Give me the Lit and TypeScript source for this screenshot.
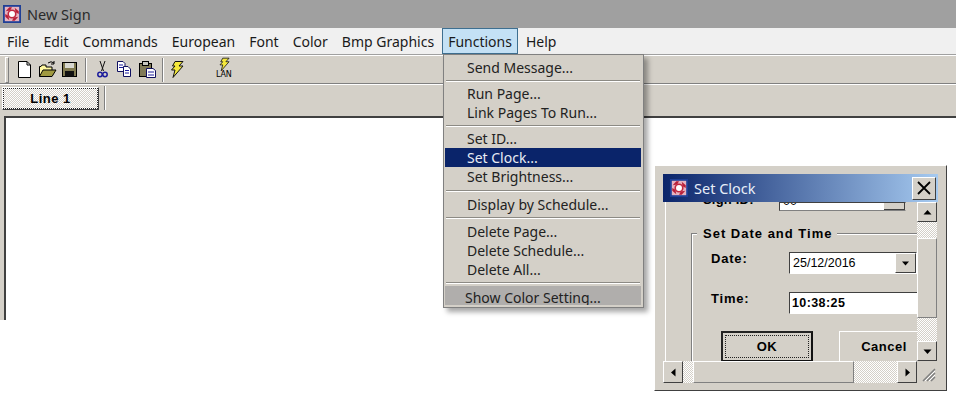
import { LitElement, html, css, svg } from "lit";
import { customElement } from "lit/decorators.js";

const sysIcon = (size: number) => html`<svg width=${size} height=${size} viewBox="0 0 20 20">
  <rect x="1" y="1" width="18" height="18" fill="#e6b4c0" stroke="#1f3f96" stroke-width="2"/>
  <path d="M3 7L7 2.5H10L8 6ZM13 3L17.5 7V10L14 8ZM17 13L13 17.5H10L12 14ZM7 17L2.5 13V10L6 12Z" fill="#b8203a"/>
  <circle cx="10" cy="10" r="4.2" fill="#fff" stroke="#c02840" stroke-width="1.8"/>
</svg>`;

const icons = {
  doc: svg`<path d="M3.5 1.5H12L15.5 5V17.5H3.5Z" fill="#fff" stroke="#000"/><path d="M12 1.5V5H15.5" fill="none" stroke="#000"/>`,
  open: svg`<path d="M1.5 16.5V6.5H3L4 5H8V7H14V10" fill="#fff8a0" stroke="#000"/><path d="M1.5 16.5L5 10H18L14 16.5Z" fill="#a09a40" stroke="#000"/><path d="M10 3Q13 0.5 16 3M16 1V4H13" fill="none" stroke="#000"/>`,
  save: svg`<rect x="1.5" y="2.5" width="14" height="14" fill="#807a50" stroke="#000"/><rect x="4" y="3" width="9" height="5" fill="#d8d8d0"/><rect x="4" y="11" width="9" height="5.5" fill="#111"/>`,
  cut: svg`<path d="M8 1L11.5 11M13 1L9.5 11" stroke="#111" fill="none"/><circle cx="8" cy="14.5" r="2.2" fill="none" stroke="#1c1c9c" stroke-width="1.5"/><circle cx="13" cy="14.5" r="2.2" fill="none" stroke="#1c1c9c" stroke-width="1.5"/>`,
  copy: svg`<path d="M2.5 1.5H8L10 3.5V11.5H2.5Z" fill="#fff" stroke="#101060"/><path d="M8.5 6.5H13L15.5 9V16.5H8.5Z" fill="#fff" stroke="#101060"/><path d="M4 5H8M4 7.5H8M10 10.5H14M10 13H14" stroke="#1c1c9c"/>`,
  paste: svg`<rect x="1.5" y="3.5" width="12" height="13" fill="#807a58" stroke="#000"/><rect x="4.5" y="1.5" width="6" height="4" fill="#c8c8c0" stroke="#000"/><path d="M8.5 8.5H15L17.5 10.5V17.5H8.5Z" fill="#fff" stroke="#101060"/><path d="M10 12H16M10 15H16" stroke="#1c1c9c"/>`,
  bolt: svg`<path d="M6 1.5H14L10 6H14L4 17.5L6 10H2.5L6 6H3.5Z" fill="#f4e83c" stroke="#111"/>`,
};

const ico = (p: unknown) => html`<svg class="ico" width="19" height="19" viewBox="0 0 19 19">${p}</svg>`;
const arrow = (d: string) => html`<svg width="9" height="9" viewBox="0 0 9 9"><path d=${d} fill="#000"/></svg>`;

@customElement("app-root")
export class AppRoot extends LitElement {
  static styles = css`
    :host { display: block; position: relative; width: 956px; height: 400px; background: #fff; overflow: hidden; font-family: "Noto Sans", sans-serif; }
    .main { height: 320px; background: #d4d0c8; display: flex; flex-direction: column; }
    .title { height: 28px; background: #a0a0a0; display: flex; align-items: center; gap: 6px; padding-left: 3px; color: #2a2a2a; font-size: 14.5px; }
    .menubar { height: 26px; background: #f0f0f0; display: flex; align-items: center; font-size: 14px; color: #1a1a1a; border-bottom: 1px solid #a0a0a0; box-sizing: content-box; }
    .mi { height: 26px; padding: 0 6px; display: flex; align-items: center; white-space: nowrap; box-sizing: border-box; border: 1px solid transparent; }
    .mi.active { background: #c4e1f5; border-color: #3e6f90; padding: 0 5px; margin: 0 1px; }
    .toolbar { height: 29px; border-top: 1px solid #fff; border-bottom: 1px solid #808080; display: flex; align-items: center; padding-left: 5px; box-sizing: border-box; }
    .grip { width: 2px; height: 24px; border: 1px solid; border-color: #fff #808080 #808080 #fff; margin-right: 6px; }
    .ico { display: block; flex: none; }
    .tools { display: flex; align-items: center; gap: 4px; }
    .tsep { width: 0; height: 24px; border-left: 1px solid #808080; border-right: 1px solid #fff; margin: 0 1px; }
    .lan { position: relative; width: 19px; height: 25px; margin-left: 23px; }
    .lan svg { width: 15px; height: 15px; margin-left: 3px; display: block; }
    .lan span { position: absolute; left: 1px; top: 13px; font: 8px/10px "DejaVu Sans", sans-serif; color: #000; letter-spacing: -0.2px; }
    .tabs { height: 27px; border-top: 1px solid #fff; display: flex; align-items: center; padding-left: 2px; gap: 5px; box-sizing: border-box; }
    .tab { width: 97px; height: 23px; box-sizing: border-box; border: 1px solid; border-color: #fff #404040 #404040 #fff; background: repeating-conic-gradient(#fff 0 25%, #d4d0c8 0 50%) 0 0 / 2px 2px; display: flex; align-items: center; justify-content: center; font: bold 13px "Liberation Sans", sans-serif; outline: 1px dotted #222; outline-offset: -2px; letter-spacing: 0.5px; }
    .tabsep { height: 24px; border-left: 1px solid #808080; border-right: 1px solid #fff; }
    .clientwrap { flex: 1; padding: 5px 0 0 4px; }
    .client { height: 100%; box-sizing: border-box; background: #fff; border-left: 2px solid #404040; border-top: 2px solid #404040; }

    .menu { position: absolute; left: 443px; top: 54px; width: 201px; height: 254px; box-sizing: border-box; background: #d4d0c8; border: 1px solid #808080; padding: 3px 2px 0 1px; box-shadow: 4px 4px 5px rgba(0,0,0,.35); font-size: 14px; color: #222; overflow: hidden; }
    .row { height: 19px; line-height: 19px; padding-left: 22px; white-space: nowrap; }
    .row.sel { background: #0a246a; color: #e8ecf4; }
    .row.fade { background: #b0aeac; padding-left: 20px; height: 19px; line-height: 24px; overflow: hidden; }
    .sep { height: 7px; display: flex; align-items: center; padding: 0 1px; }
    .sep.wide { height: 9px; }
    .sep.mid { height: 8px; }
    .sep::before { content: ""; flex: 1; border-top: 1px solid #8c8a84; border-bottom: 1px solid #fff; }

    .dialog { position: absolute; left: 654px; top: 165px; width: 293px; height: 226px; box-sizing: border-box; background: #d4d0c8; border: 1px solid; border-color: #fff #404040 #404040 #fff; padding: 8px 8px 0; font-family: "Liberation Sans", sans-serif; font-size: 13px; color: #000; }
    .dtitle { height: 28px; background: linear-gradient(90deg, #0a246a, #a6caf0); display: flex; align-items: center; padding-left: 7px; gap: 6px; color: #e8eef8; font: 14.5px "Noto Sans", sans-serif; position: relative; }
    .close { margin-left: auto; margin-right: 2px; width: 24px; height: 23px; box-sizing: border-box; background: #d4d0c8; border: 1px solid; border-color: #fff #404040 #404040 #fff; display: flex; align-items: center; justify-content: center; }
    .dbody { display: grid; grid-template-columns: 254px 20px; grid-template-rows: 159px 22px 1fr; }
    .view { overflow: hidden; position: relative; border-left: 1px solid #fff; margin-left: 2px; padding-left: 25px; }
    .signrow { display: flex; height: 8px; position: relative; }
    .signlabel { margin-left: 12px; height: 8px; overflow: hidden; width: 76px; font: bold 13px/15px "Liberation Sans", sans-serif; letter-spacing: 0.2px; }
    .signlabel span { display: block; margin-top: -10px; white-space: nowrap; }
    .signfield { width: 127px; height: 9px; box-sizing: border-box; background: #fff; border: 1px solid; border-color: #404040 #d4d0c8 #808080 #404040; overflow: hidden; position: relative; padding-left: 3px; }
    .signfield span { display: block; font: 12.5px/14px "Liberation Sans", sans-serif; margin-top: -9px; }
    .signbtn { position: absolute; right: 0; bottom: 0; top: 0; width: 20px; background: #d4d0c8; border-right: 1px solid #404040; border-bottom: 1px solid #404040; }
    .group { margin-top: 23px; width: 300px; height: 140px; box-sizing: border-box; border: 1px solid #808080; border-right: 0; border-bottom: 0; box-shadow: inset 1px 1px 0 #fff; padding: 18px 0 0 19px; position: relative; }
    .legend { position: absolute; left: 5px; top: -8px; background: #d4d0c8; padding: 0 5px 0 6px; font: bold 13px "Liberation Sans", sans-serif; letter-spacing: 1px; line-height: 15px; }
    .frow { display: flex; align-items: flex-start; }
    .frow.second { margin-top: 18px; }
    .flabel { width: 78px; font: bold 13px "Liberation Sans", sans-serif; letter-spacing: 0.8px; line-height: 15px; margin-top: -1px; }
    .combo { width: 128px; height: 22px; box-sizing: border-box; background: #fff; border: 1px solid; border-color: #404040 #fff #fff #404040; display: flex; align-items: center; padding-left: 3px; font-size: 12.5px; justify-content: space-between; }
    .cbtn { width: 21px; height: 20px; background: #d4d0c8; box-sizing: border-box; border: 1px solid; border-color: #fff #404040 #404040 #fff; display: flex; align-items: center; justify-content: center; }
    .input { width: 160px; height: 22px; box-sizing: border-box; background: #fff; border: 1px solid; border-color: #404040 #fff #fff #404040; display: flex; align-items: center; padding-left: 2px; font: bold 12.5px "Liberation Sans", sans-serif; letter-spacing: 0.4px; }
    .btns { display: flex; gap: 26px; margin: 17px 0 0 10px; }
    .btn { height: 31px; box-sizing: border-box; display: flex; align-items: center; justify-content: center; background: #d4d0c8; font: bold 13px "Liberation Sans", sans-serif; letter-spacing: 0.5px; flex: none; }
    .ok { width: 92px; border: 2px solid; border-color: #222 #111 #111 #222; outline: 1px dotted #222; outline-offset: -5px; }
    .cancel { width: 92px; border: 1px solid; border-color: #fff #404040 #404040 #fff; padding-right: 2px; }
    .vbar { display: flex; flex-direction: column; height: 159px; background: repeating-conic-gradient(#fff 0 25%, #d4d0c8 0 50%) 0 0 / 2px 2px; }
    .sbtn { flex: none; box-sizing: border-box; background: #d4d0c8; border: 1px solid; border-color: #fff #404040 #404040 #fff; display: flex; align-items: center; justify-content: center; }
    .vbar .sbtn { width: 20px; height: 20px; }
    .vdith1 { height: 16px; }
    .vthumb { height: 80px; flex: none; box-sizing: border-box; background: #d4d0c8; border: 1px solid; border-color: #fff #808080 #808080 #fff; }
    .vdith2 { flex: 1; }
    .hbar { display: flex; height: 22px; background: repeating-conic-gradient(#fff 0 25%, #d4d0c8 0 50%) 0 0 / 2px 2px; }
    .hbar .sbtn { width: 20px; height: 22px; }
    .hthumb { width: 161px; margin-left: 10px; box-sizing: border-box; background: #d4d0c8; border: 1px solid; border-color: #fff #808080 #808080 #fff; flex: none; }
    .hend { margin-left: auto; }
    .grip2 { display: flex; align-items: flex-end; justify-content: flex-end; }
  `;

  private row(t: string, cls = "") { return html`<div class="row ${cls}">${t}</div>`; }

  render() {
    return html`
      <div class="main">
        <div class="title">${sysIcon(18)}<span>New Sign</span></div>
        <div class="menubar">
          ${["File", "Edit", "Commands", "European", "Font", "Color", "Bmp Graphics"].map(m => html`<div class="mi">${m}</div>`)}
          <div class="mi active">Functions</div>
          <div class="mi">Help</div>
        </div>
        <div class="toolbar">
          <div class="grip"></div>
          <div class="tools">
            ${ico(icons.doc)}${ico(icons.open)}${ico(icons.save)}
            <div class="tsep"></div>
            ${ico(icons.cut)}${ico(icons.copy)}${ico(icons.paste)}
            <div class="tsep"></div>
            ${ico(icons.bolt)}
            <div class="lan"><svg viewBox="0 0 19 19">${icons.bolt}</svg><span>LAN</span></div>
          </div>
        </div>
        <div class="tabs"><div class="tab">Line 1</div><div class="tabsep"></div></div>
        <div class="clientwrap"><div class="client"></div></div>
      </div>

      <div class="menu">
        ${this.row("Send Message...")}
        <div class="sep"></div>
        ${this.row("Run Page...")}${this.row("Link Pages To Run...")}
        <div class="sep"></div>
        ${this.row("Set ID...")}${this.row("Set Clock...", "sel")}${this.row("Set Brightness...")}
        <div class="sep wide"></div>
        ${this.row("Display by Schedule...")}
        <div class="sep mid"></div>
        ${this.row("Delete Page...")}${this.row("Delete Schedule...")}${this.row("Delete All...")}
        <div class="sep"></div>
        ${this.row("Show Color Setting...", "fade")}
      </div>

      <div class="dialog">
        <div class="dtitle">${sysIcon(18)}<span>Set Clock</span>
          <div class="close"><svg width="14" height="14" viewBox="0 0 14 14"><path d="M1 1L13 13M13 1L1 13" stroke="#000" stroke-width="1.8"/></svg></div>
        </div>
        <div class="dbody">
          <div class="view">
            <div class="signrow">
              <div class="signlabel"><span>Sign ID:</span></div>
              <div class="signfield"><span>00</span><div class="signbtn"></div></div>
            </div>
            <div class="group">
              <div class="legend">Set Date and Time</div>
              <div class="frow"><div class="flabel">Date:</div>
                <div class="combo"><span>25/12/2016</span><div class="cbtn">${arrow("M1 2.5H8L4.5 6.5Z")}</div></div>
              </div>
              <div class="frow second"><div class="flabel">Time:</div>
                <div class="input">10:38:25</div>
              </div>
              <div class="btns"><div class="btn ok">OK</div><div class="btn cancel">Cancel</div></div>
            </div>
          </div>
          <div class="vbar">
            <div class="sbtn">${arrow("M4.5 2L8.5 6.5H0.5Z")}</div>
            <div class="vdith1"></div>
            <div class="vthumb"></div>
            <div class="vdith2"></div>
            <div class="sbtn">${arrow("M0.5 2.5H8.5L4.5 7Z")}</div>
          </div>
          <div class="hbar">
            <div class="sbtn">${arrow("M2 4.5L6.5 0.5V8.5Z")}</div>
            <div class="hthumb"></div>
            <div class="sbtn hend">${arrow("M7 4.5L2.5 0.5V8.5Z")}</div>
          </div>
          <div class="grip2"><svg width="20" height="22" viewBox="0 0 20 22"><path d="M6 20L18 8M10 20L18 12M14 20L18 16" stroke="#808080" stroke-width="1.5"/><path d="M8 20L18 10M12 20L18 14" stroke="#fff"/></svg></div>
        </div>
      </div>
    `;
  }
}
